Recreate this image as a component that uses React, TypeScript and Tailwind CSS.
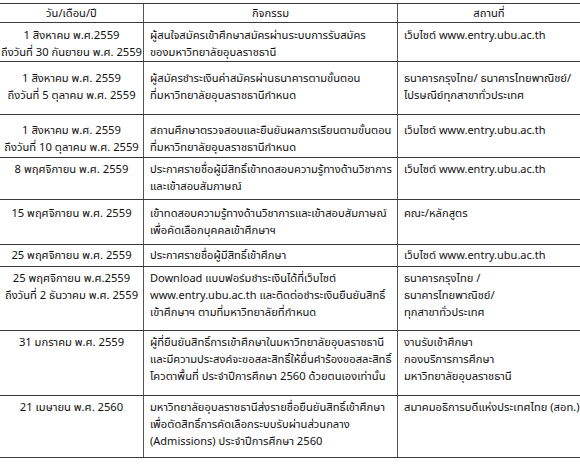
const rows = [
  {
    h: 'h-[39px]',
    pt: 'pt-[4px]',
    date: ['1 สิงหาคม พ.ศ.2559', 'ถึงวันที่ 30 กันยายน พ.ศ. 2559'],
    act: ['ผู้สนใจสมัครเข้าศึกษาสมัครผ่านระบบการรับสมัคร', 'ของมหาวิทยาลัยอุบลราชธานี'],
    place: ['เว็บไซต์ www.entry.ubu.ac.th'],
  },
  {
    h: 'h-[53px]',
    pt: 'pt-[8px]',
    date: ['1 สิงหาคม พ.ศ. 2559', 'ถึงวันที่ 5 ตุลาคม พ.ศ. 2559'],
    act: ['ผู้สมัครชำระเงินค่าสมัครผ่านธนาคารตามขั้นตอน', 'ที่มหาวิทยาลัยอุบลราชธานีกำหนด'],
    place: ['ธนาคารกรุงไทย/ ธนาคารไทยพาณิชย์/', 'ไปรษณีย์ทุกสาขาทั่วประเทศ'],
  },
  {
    h: 'h-[43px]',
    pt: 'pt-[7px]',
    date: ['1 สิงหาคม พ.ศ. 2559', 'ถึงวันที่ 10 ตุลาคม พ.ศ. 2559'],
    act: ['สถานศึกษาตรวจสอบและยืนยันผลการเรียนตามขั้นตอน', 'ที่มหาวิทยาลัยอุบลราชธานีกำหนด'],
    place: ['เว็บไซต์ www.entry.ubu.ac.th'],
  },
  {
    h: 'h-[42px]',
    pt: 'pt-[3px]',
    date: ['8 พฤศจิกายน พ.ศ. 2559'],
    act: ['ประกาศรายชื่อผู้มีสิทธิ์เข้าทดสอบความรู้ทางด้านวิชาการ', 'และเข้าสอบสัมภาษณ์'],
    place: ['เว็บไซต์ www.entry.ubu.ac.th'],
  },
  {
    h: 'h-[45px]',
    pt: 'pt-[5px]',
    date: ['15 พฤศจิกายน พ.ศ. 2559'],
    act: ['เข้าทดสอบความรู้ทางด้านวิชาการและเข้าสอบสัมภาษณ์', 'เพื่อคัดเลือกบุคคลเข้าศึกษาฯ'],
    place: ['คณะ/หลักสูตร'],
  },
  {
    h: 'h-[22px]',
    pt: 'pt-[2px]',
    date: ['25 พฤศจิกายน พ.ศ. 2559'],
    act: ['ประกาศรายชื่อผู้มีสิทธิ์เข้าศึกษา'],
    place: ['เว็บไซต์ www.entry.ubu.ac.th'],
  },
  {
    h: 'h-[64px]',
    pt: 'pt-[3px]',
    date: ['25 พฤศจิกายน พ.ศ.2559', 'ถึงวันที่ 2 ธันวาคม พ.ศ. 2559'],
    act: [
      'Download แบบฟอร์มชำระเงินได้ที่เว็บไซต์',
      'www.entry.ubu.ac.th และติดต่อชำระเงินยืนยันสิทธิ์',
      'เข้าศึกษาฯ ตามที่มหาวิทยาลัยที่กำหนด',
    ],
    place: ['ธนาคารกรุงไทย /', 'ธนาคารไทยพาณิชย์/', 'ทุกสาขาทั่วประเทศ'],
  },
  {
    h: 'h-[65px]',
    pt: 'pt-[3px]',
    date: ['31 มกราคม พ.ศ. 2559'],
    act: [
      'ผู้ที่ยืนยันสิทธิ์การเข้าศึกษาในมหาวิทยาลัยอุบลราชธานี',
      'และมีความประสงค์จะขอสละสิทธิ์ให้ยื่นคำร้องขอสละสิทธิ์',
      'โควตาพื้นที่ ประจำปีการศึกษา 2560 ด้วยตนเองเท่านั้น',
    ],
    place: ['งานรับเข้าศึกษา', 'กองบริการการศึกษา', 'มหาวิทยาลัยอุบลราชธานี'],
  },
  {
    h: 'h-[62px]',
    pt: 'pt-[3px]',
    date: ['21 เมษายน พ.ศ. 2560'],
    act: [
      'มหาวิทยาลัยอุบลราชธานีส่งรายชื่อยืนยันสิทธิ์เข้าศึกษา',
      'เพื่อตัดสิทธิ์การคัดเลือกระบบรับผ่านส่วนกลาง',
      '(Admissions) ประจำปีการศึกษา 2560',
    ],
    place: ['สมาคมอธิการบดีแห่งประเทศไทย (สอท.)'],
  },
];

// latin words (urls, "Download") render a touch big in the fallback font
function Line({ text }: { text: string }) {
  const parts = text.split(/(\(?[A-Za-z][A-Za-z.]*\)?)/);
  return (
    <div className="whitespace-nowrap">
      {parts.map((p, i) =>
        i % 2 === 1 ? (
          <span key={i} className="text-[11px]">
            {p}
          </span>
        ) : (
          p
        ),
      )}
    </div>
  );
}

function Lines({ items }: { items: string[] }) {
  return (
    <>
      {items.map((t) => (
        <Line key={t} text={t} />
      ))}
    </>
  );
}

export default function App() {
  return (
    <div
      className="h-[465px] w-[580px] overflow-hidden bg-white pt-[3px] text-[11.2px] leading-[17px] text-[#111]"
      style={{ fontFamily: 'Tahoma, "Noto Sans Thai", "Noto Sans", "DejaVu Sans", sans-serif' }}
    >
      {/* header */}
      <div className="grid h-[20px] grid-cols-[143px_254px_1fr] border-y-[1.5px] border-[#3a3a3a] text-center">
        <div className="pt-[1px]">วัน/เดือน/ปี</div>
        <div className="border-l border-[#555] pt-[1px]">กิจกรรม</div>
        <div className="border-l border-[#555] pt-[1px]">สถานที่</div>
      </div>

      {rows.map((r, i) => (
        <div
          key={i}
          className={`grid grid-cols-[143px_254px_1fr] border-b-[1.5px] border-[#3a3a3a] ${r.h}`}
        >
          <div className={`text-center ${r.pt}`}>
            <Lines items={r.date} />
          </div>
          <div className={`border-l border-[#555] pl-[6px] ${r.pt}`}>
            <Lines items={r.act} />
          </div>
          <div className={`border-l border-[#555] pl-[6px] ${r.pt}`}>
            <Lines items={r.place} />
          </div>
        </div>
      ))}
    </div>
  );
}
